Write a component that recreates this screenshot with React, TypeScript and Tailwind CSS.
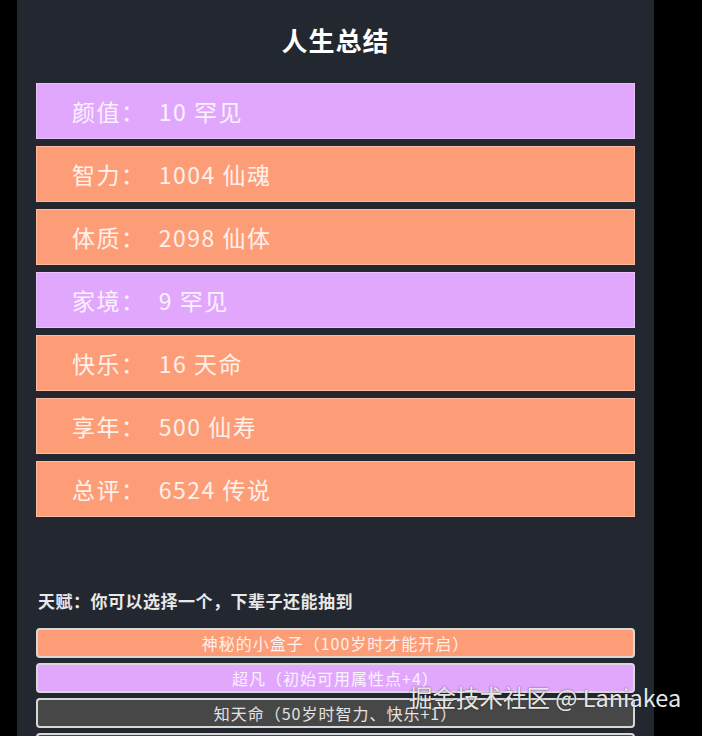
import React from "react"

type Grade = "purple" | "orange"

const stats: { label: string; value: string; grade: Grade }[] = [
  { label: "颜值", value: "10 罕见", grade: "purple" },
  { label: "智力", value: "1004 仙魂", grade: "orange" },
  { label: "体质", value: "2098 仙体", grade: "orange" },
  { label: "家境", value: "9 罕见", grade: "purple" },
  { label: "快乐", value: "16 天命", grade: "orange" },
  { label: "享年", value: "500 仙寿", grade: "orange" },
  { label: "总评", value: "6524 传说", grade: "orange" },
]

const talents: { name: string; grade: "orange" | "purple" | "grey" }[] = [
  { name: "神秘的小盒子（100岁时才能开启）", grade: "orange" },
  { name: "超凡（初始可用属性点+4）", grade: "purple" },
  { name: "知天命（50岁时智力、快乐+1）", grade: "grey" },
  { name: "乐观（快乐+1）", grade: "grey" },
  { name: "天生丽质（颜值+1）", grade: "grey" },
]

const barColor: Record<Grade, string> = {
  purple: "bg-[#e1a7fd]",
  orange: "bg-[#fd9d77]",
}

const talentColor = {
  orange: "bg-[#fd9d77]",
  purple: "bg-[#e1a7fd]",
  grey: "bg-[#474747]",
}

export default function App() {
  return (
    <div
      className="relative min-h-screen bg-black"
      style={{ fontFamily: '"Noto Sans CJK SC", "Noto Sans", sans-serif' }}
    >
      <div className="ml-[17px] w-[637px] bg-[#23272f] px-[19px] pb-10 min-h-screen">
        {/* 标题 */}
        <h1 className="h-[83px] pt-[22px] text-center text-[26px] leading-[36px] font-bold text-white tracking-[1px]">
          人生总结
        </h1>

        {/* 属性总结 */}
        <div className="flex flex-col gap-[7px]">
          {stats.map((s) => (
            <div
              key={s.label}
              className={`h-[56px] flex items-center pl-[35px] border border-white/30 ${barColor[s.grade]}`}
            >
              <span className="text-[23px] text-white/85 whitespace-pre tracking-[1.5px]">
                {s.label}：  {s.value}
              </span>
            </div>
          ))}
        </div>

        {/* 天赋 */}
        <p className="mt-[72px] pl-[2px] text-[17px] leading-[24px] font-bold text-[#e8e8e8] tracking-[0.5px]">
          天赋：你可以选择一个，下辈子还能抽到
        </p>
        <div className="mt-[15px] flex flex-col gap-[5px]">
          {talents.map((t) => (
            <button
              key={t.name}
              className={`h-[30px] w-full rounded-[4px] border-2 border-[#d8d8d8] text-[16px] tracking-[1px] text-white/85 ${talentColor[t.grade]}`}
            >
              {t.name}
            </button>
          ))}
        </div>
      </div>

      {/* 水印 */}
      <div className="absolute left-[409px] top-[683px] text-[23.5px] leading-[28px] text-[#e6e6e6] [text-shadow:0_0_2px_rgba(0,0,0,0.6)] whitespace-nowrap">
        掘金技术社区 @ Laniakea
      </div>
    </div>
  )
}
